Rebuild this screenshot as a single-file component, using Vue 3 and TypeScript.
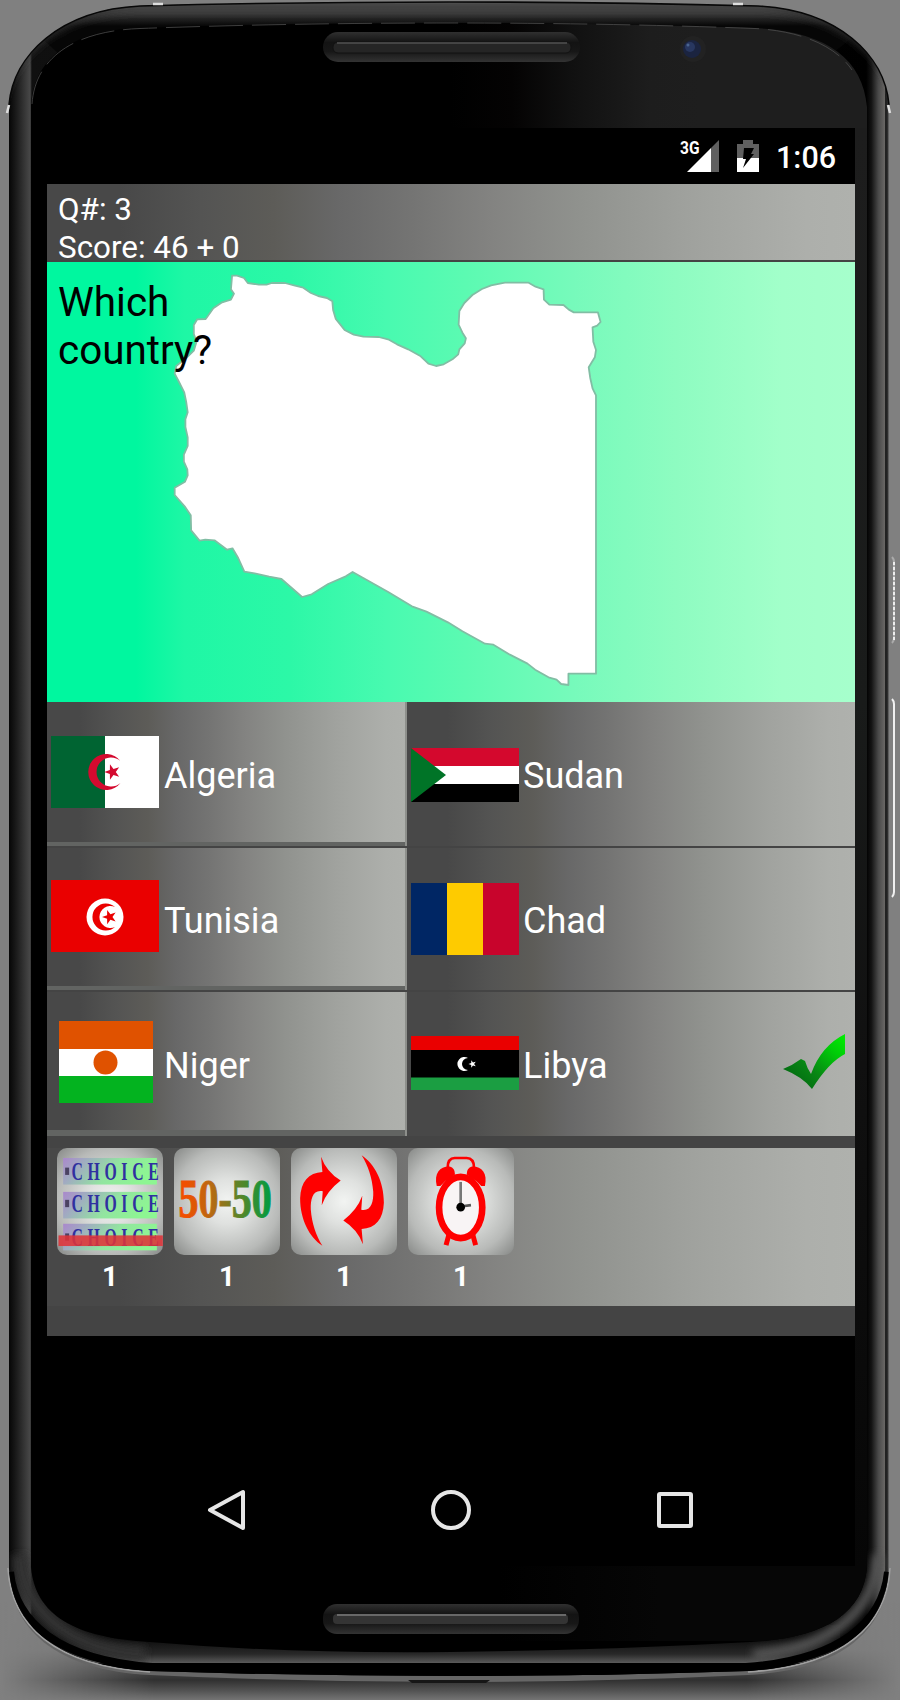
<script setup lang="ts">
interface Answer {
  name: string
  flag: string
  correct?: boolean
}

interface Lifeline {
  id: string
  left: number
}

interface ChoiceRow {
  top: number
  baseline: number
}

const answers: Answer[] = [
  { name: 'Algeria', flag: 'algeria' },
  { name: 'Sudan', flag: 'sudan' },
  { name: 'Tunisia', flag: 'tunisia' },
  { name: 'Chad', flag: 'chad' },
  { name: 'Niger', flag: 'niger' },
  { name: 'Libya', flag: 'libya', correct: true },
]

const lifelines: Lifeline[] = [
  { id: 'choice', left: 1 },
  { id: 'fifty', left: 1 },
  { id: 'swap', left: 1 },
  { id: 'time', left: 1 },
]

const choiceRows: ChoiceRow[] = [
  { top: 30, baseline: 96 },
  { top: 132, baseline: 193 },
  { top: 228, baseline: 294 },
]
const star = '0,-10 2.3,-3.2 9.5,-3.1 3.8,1.2 5.9,8.1 0,4 -5.9,8.1 -3.8,1.2 -9.5,-3.1 -2.3,-3.2'
const arrow =
  'M127 348 C88 322 60 270 60 205 C62 155 85 128 127 126 L123 80 Q138 124 182 152 Q140 184 125 226 L128 184 C98 178 91 208 92 238 C95 280 108 318 127 348Z'
</script>

<template>
  <div class="device">
    <svg class="frame" viewBox="0 0 900 1700" width="900" height="1700" aria-hidden="true">
      <defs>
        <linearGradient id="floor" x1="0" y1="1600" x2="0" y2="1700" gradientUnits="userSpaceOnUse">
          <stop offset="0" stop-color="#808080" />
          <stop offset=".5" stop-color="#747474" />
          <stop offset=".8" stop-color="#303030" />
          <stop offset=".9" stop-color="#505050" />
          <stop offset="1" stop-color="#747474" />
        </linearGradient>
        <linearGradient id="floorMaskFill" x1="0" x2="900" y1="0" y2="0" gradientUnits="userSpaceOnUse">
          <stop offset="0" stop-color="#000" />
          <stop offset=".17" stop-color="#fff" />
          <stop offset=".83" stop-color="#fff" />
          <stop offset="1" stop-color="#000" />
        </linearGradient>
        <mask id="floorMask"><rect x="0" y="1600" width="900" height="100" fill="url(#floorMaskFill)" /></mask>
        <linearGradient id="rimSides" x1="9" x2="889" y1="0" y2="0" gradientUnits="userSpaceOnUse">
          <stop offset="0" stop-color="#060606" />
          <stop offset=".006" stop-color="#151515" />
          <stop offset=".014" stop-color="#2b2b2b" />
          <stop offset=".024" stop-color="#484848" />
          <stop offset=".026" stop-color="#101010" />
          <stop offset=".974" stop-color="#000" />
          <stop offset=".98" stop-color="#131313" />
          <stop offset=".988" stop-color="#4a4a4a" />
          <stop offset=".995" stop-color="#686664" />
          <stop offset=".996" stop-color="#222" />
          <stop offset=".998" stop-color="#222" />
          <stop offset="1" stop-color="#777" />
        </linearGradient>
        <linearGradient id="topRim" x1="0" x2="0" y1="2" y2="26" gradientUnits="userSpaceOnUse">
          <stop offset="0" stop-color="#666" />
          <stop offset=".3" stop-color="#505050" />
          <stop offset=".65" stop-color="#272727" />
          <stop offset="1" stop-color="#060606" />
        </linearGradient>
        <linearGradient id="bottomRim" x1="0" x2="0" y1="1638" y2="1684" gradientUnits="userSpaceOnUse">
          <stop offset="0" stop-color="#0b0b0b" />
          <stop offset=".35" stop-color="#282828" />
          <stop offset=".54" stop-color="#5a5a5a" />
          <stop offset=".56" stop-color="#000" />
          <stop offset="1" stop-color="#000" />
        </linearGradient>
        <linearGradient id="sheen" x1="450" x2="700" y1="0" y2="0" gradientUnits="userSpaceOnUse">
          <stop offset="0" stop-color="#000" />
          <stop offset=".25" stop-color="#040303" />
          <stop offset=".5" stop-color="#111" />
          <stop offset=".8" stop-color="#1d1d1d" />
          <stop offset="1" stop-color="#1e1e1e" />
        </linearGradient>
        <linearGradient id="chin" x1="500" x2="660" y1="0" y2="0" gradientUnits="userSpaceOnUse">
          <stop offset="0" stop-color="#000" />
          <stop offset="1" stop-color="#060606" />
        </linearGradient>
        <linearGradient id="sideFace" x1="0" x2="0" y1="128" y2="1567" gradientUnits="userSpaceOnUse">
          <stop offset="0" stop-color="#1d1d1d" />
          <stop offset=".4" stop-color="#191b1a" />
          <stop offset=".65" stop-color="#101010" />
          <stop offset="1" stop-color="#060606" />
        </linearGradient>
        <linearGradient id="slot" x1="0" x2="0" y1="0" y2="1">
          <stop offset="0" stop-color="#303030" />
          <stop offset=".35" stop-color="#131313" />
          <stop offset=".65" stop-color="#171717" />
          <stop offset="1" stop-color="#333" />
        </linearGradient>
        <clipPath id="faceClip">
          <path d="M31 107 C33 60 70 30 140 28 Q290 23 450 23 T755 28 C825 31 863 58 867 107 V1567 C863 1615 823 1638 750 1642 Q610 1650 450 1652 T150 1642 C75 1638 35 1615 31 1567Z" />
        </clipPath>
        <clipPath id="bodyClip">
          <path d="M9 105 C13 55 60 10 140 6 Q290 2 450 2 T758 6 C838 10 885 55 889 105 V1568 C886 1625 843 1665 748 1671 Q600 1676 450 1676 T150 1671 C55 1665 12 1625 9 1568Z" />
        </clipPath>
        <filter id="soft" x="-10%" y="-10%" width="120%" height="120%"><feGaussianBlur stdDeviation="4" /></filter>
      </defs>

      <rect width="900" height="1700" fill="#808080" />
      <rect y="1600" width="900" height="100" fill="url(#floor)" mask="url(#floorMask)" />
      <path d="M8 1568 C11 1628 53 1670 150 1675 Q300 1682 450 1682 T748 1675 C845 1670 887 1628 890 1568" fill="#666" />
      <path d="M8 1568 C11 1625 54 1666 150 1672" fill="none" stroke="#a0a0a0" stroke-width="1.6" />
      <path d="M890 1568 C887 1625 844 1666 748 1672" fill="none" stroke="#a0a0a0" stroke-width="1.6" />
      <path d="M408 1680 L412 1683 H486 L490 1680Z" fill="#161616" />

      <g clip-path="url(#bodyClip)">
        <rect width="900" height="1700" fill="url(#rimSides)" />
        <path d="M0 0 H900 L760 110 H120Z" fill="url(#topRim)" />
        <path d="M-2 100 C4 48 50 -2 140 -5 H758 C848 -2 894 48 900 100" transform="translate(0 12)" fill="none" stroke="#343434" stroke-width="8" filter="url(#soft)" />
        <path d="M60 1625 H840 V1700 H60Z" fill="url(#bottomRim)" />
        <path d="M20 1555 C22 1605 62 1649 145 1655" fill="none" stroke="#333" stroke-width="16" filter="url(#soft)" />
        <path d="M878 1555 C876 1605 836 1649 753 1655" fill="none" stroke="#555" stroke-width="11" filter="url(#soft)" />
        <path d="M10 1572 C15 1622 58 1660 152 1667 H746 C840 1660 883 1622 888 1572" fill="none" stroke="#000" stroke-width="8" />
      </g>
      <path d="M9 105 C13 55 60 10 140 6 Q290 2 450 2 T758 6 C838 10 885 55 889 105" fill="none" stroke="#080808" stroke-width="1.6" />

      <g clip-path="url(#faceClip)">
        <rect width="900" height="1700" fill="#000" />
        <rect x="450" y="20" width="450" height="110" fill="url(#sheen)" />
        <rect x="855" y="128" width="12" height="1440" fill="url(#sideFace)" />
        <rect x="500" y="1566" width="370" height="75" fill="url(#chin)" />
      </g>
      <path d="M32 104 C35 60 71 31 140 28.500 Q290 23 450 23 T755 28.500 C800 31 835 45 852 70" fill="none" stroke="#4c4c4c" stroke-width="1" stroke-dasharray="34 9" opacity=".8" />
      <path d="M153 4 h10 M733 4 h10 M7 113 l2 -8 M890 113 l-2 -8" stroke="#ddd" stroke-width="2.5" />

      <rect x="323" y="32" width="257" height="30" rx="15" fill="url(#slot)" />
      <rect x="333" y="42" width="238" height="11" rx="5" fill="#252525" stroke="#121212" />
      <path d="M337 43 H567" stroke="#505050" stroke-width="1.5" />
      <rect x="323" y="1604" width="256" height="30" rx="14" fill="url(#slot)" />
      <rect x="333" y="1614" width="235" height="10" rx="4" fill="#343434" />
      <path d="M337 1615 H566" stroke="#686868" stroke-width="2" />

      <circle cx="693" cy="49" r="13" fill="#222" />
      <circle cx="692" cy="49" r="9" fill="#1b2440" />
      <circle cx="690" cy="47" r="5" fill="#283760" />
      <circle cx="688" cy="45" r="1.500" fill="#4a648f" />

      <path d="M892 557 q2 2 2 5 V638 q0 3 -2 5" fill="none" stroke="#aaa" stroke-width="2" />
      <path d="M894 562 V640" stroke="#eee" stroke-width="2" stroke-dasharray="3 2" />
      <path d="M892 699 q2 2 2 5 V892 q0 3 -2 5" fill="none" stroke="#f0f0f0" stroke-width="2" />
    </svg>

    <main class="screen">
      <header class="status">
        <svg class="signal" viewBox="0 0 40 34" width="40" height="34">
          <text x="0" y="15" class="net" textLength="19.5" lengthAdjust="spacingAndGlyphs">3G</text>
          <path d="M39 1 V33 H31 V9Z" fill="#606060" />
          <path d="M7 33 L31 9 V33Z" fill="#fff" />
        </svg>
        <svg class="battery" viewBox="0 0 22 32" width="22" height="32">
          <path d="M0 4 H6 V0 H16 V4 H22 V18 H0Z" fill="#606060" />
          <path d="M0 18 H22 V32 H0Z" fill="#fff" />
          <path d="M7 8 H17 L14 14 H17 L6 28 L9 19 H6Z" fill="#000" />
        </svg>
        <span class="clock">1:06</span>
      </header>

      <section class="score">
        <p>Q#: 3</p>
        <p>Score: 46 + 0</p>
      </section>

      <section class="question">
        <svg class="map" viewBox="18.3 6 2111.6 1320" preserveAspectRatio="none">
          <path
            d="M502 47 L515 47 L533 54 L543 69 L572 74 L592 74 L606 69 L640 69 L664 76 L688 83 L708 99 L727 108 L750 114 L764 124 L766 150 L773 177 L785 194 L796 210 L820 224 L845 230 L885 231 L912 239 L933 253 L962 268 L995 289 L1015 311 L1035 318 L1055 313 L1078 298 L1093 283 L1096 268 L1110 250 L1113 235 L1104 218 L1094 194 L1096 153 L1109 129 L1130 105 L1155 87 L1179 76 L1215 68 L1277 68 L1295 80 L1316 88 L1317 119 L1331 134 L1368 135 L1382 149 L1395 157 L1458 157 L1465 186 L1456 197 L1444 202 L1446 245 L1453 270 L1450 292 L1434 322 L1438 354 L1444 385 L1453 406 L1453 1241 L1381 1241 L1381 1275 L1362 1272 L1350 1259 L1329 1252 L1294 1229 L1274 1211 L1228 1184 L1185 1154 L1163 1151 L1104 1114 L1066 1087 L1010 1055 L972 1039 L910 996 L817 936 L799 949 L753 972 L710 1003 L685 1011 L631 957 L599 950 L561 940 L534 935 L518 894 L503 865 L489 869 L456 841 L432 839 L417 842 L395 811 L394 766 L378 739 L352 705 L352 683 L379 665 L386 646 L385 628 L376 605 L376 584 L386 558 L386 532 L380 501 L380 478 L386 457 L382 425 L377 397 L362 363 L352 341 L356 318 L386 290 L402 272 L409 245 L402 222 L402 195 L411 178 L433 177 L453 145 L476 127 L499 119 L507 101 L499 88Z"
          />
        </svg>
        <p class="prompt">Which<br />country?</p>
      </section>

      <section class="answers">
        <button v-for="item in answers" :key="item.name" class="answer" type="button">
          <span class="flag">
            <svg v-if="item.flag === 'algeria'" viewBox="0 0 108 72" width="108" height="72">
              <rect width="108" height="72" fill="#fff" />
              <rect width="54" height="72" fill="#006432" />
              <path d="M69.500 25 A18 18 0 1 0 69.500 47 A14.500 14.500 0 1 1 69.500 25Z" fill="#d40a2f" />
              <polygon :points="star" transform="translate(61.500 36) rotate(-90) scale(.82)" fill="#d40a2f" />
            </svg>
            <svg v-else-if="item.flag === 'sudan'" class="drop-sudan" viewBox="0 0 108 54" width="108" height="54">
              <rect width="108" height="54" fill="#fff" />
              <rect width="108" height="18" fill="#d4082d" />
              <rect y="36" width="108" height="18" fill="#000" />
              <path d="M0 0 L35 27 L0 54Z" fill="#007427" />
            </svg>
            <svg v-else-if="item.flag === 'tunisia'" class="lift-tunisia" viewBox="0 0 108 72" width="108" height="72">
              <rect width="108" height="72" fill="#ea0000" />
              <circle cx="54" cy="37" r="18.500" fill="#fff" />
              <path d="M64 27 A13.500 13.500 0 1 0 64 47 A11 11 0 1 1 64 27Z" fill="#ea0000" />
              <polygon :points="star" transform="translate(58.500 37) rotate(-90) scale(.75)" fill="#ea0000" />
            </svg>
            <svg v-else-if="item.flag === 'chad'" class="drop-chad" viewBox="0 0 108 72" width="108" height="72">
              <rect width="36" height="72" fill="#002664" />
              <rect x="36" width="36" height="72" fill="#fecb00" />
              <rect x="72" width="36" height="72" fill="#c8042c" />
            </svg>
            <svg v-else-if="item.flag === 'niger'" class="niger" viewBox="0 0 94 82" width="94" height="82">
              <rect width="94" height="82" fill="#fff" />
              <rect width="94" height="28" fill="#e05200" />
              <rect y="55" width="94" height="27" fill="#03b31f" />
              <circle cx="46.500" cy="41.500" r="12" fill="#e05200" />
            </svg>
            <svg v-else class="drop-libya" viewBox="0 0 108 54" width="108" height="54">
              <rect width="108" height="54" fill="#000" />
              <rect width="108" height="14" fill="#ea0000" />
              <rect y="41.500" width="108" height="12.500" fill="#1b9e42" />
              <path d="M57 22 A7 7 0 1 0 57 34 A5.800 5.800 0 1 1 57 22Z" fill="#fff" />
              <polygon :points="star" transform="translate(61.500 28) rotate(-90) scale(.4)" fill="#fff" />
            </svg>
          </span>
          <span class="name">{{ item.name }}</span>
          <svg v-if="item.correct" class="tick" viewBox="0 0 64 56" width="64" height="56">
            <defs>
              <linearGradient id="tickFill" x1="0" y1="1" x2="1" y2="0">
                <stop offset="0" stop-color="#005c10" />
                <stop offset=".4" stop-color="#088514" />
                <stop offset=".75" stop-color="#00cc08" />
                <stop offset="1" stop-color="#00f000" />
              </linearGradient>
            </defs>
            <path d="M0 35 Q10 31 18 25 L22 27 Q24 34 28 40 Q38 12 62 0 V20 Q46 28 29 55 Q20 43 0 35Z" fill="url(#tickFill)" />
          </svg>
        </button>
      </section>

      <section class="lifelines">
        <div v-for="line in lifelines" :key="line.id" class="lifeline">
          <span class="tile">
            <svg v-if="line.id === 'choice'" viewBox="0 0 318 322" width="106" height="107">
              <defs>
                <linearGradient id="bandFill" x1="0" y1="0" x2="1" y2=".25">
                  <stop offset="0" stop-color="#aa88cc" />
                  <stop offset=".25" stop-color="#a0adc0" />
                  <stop offset=".6" stop-color="#92e5a0" />
                  <stop offset="1" stop-color="#8df692" />
                </linearGradient>
              </defs>
              <g v-for="row in choiceRows" :key="row.top">
                <rect x="18" :y="row.top" width="282" height="80" fill="url(#bandFill)" />
                <rect x="24" :y="row.baseline - 37" width="12" height="22" fill="#4b4263" />
                <text :transform="`translate(43 ${row.baseline}) scale(.65 1)`" class="choice-text" textLength="404">CHOICE</text>
              </g>
              <rect x="4" y="263" width="314" height="32" fill="#e03238" opacity=".87" />
            </svg>
            <svg v-else-if="line.id === 'fifty'" viewBox="0 0 318 322" width="106" height="107">
              <defs>
                <linearGradient id="fiftyFill" x1="14" x2="292" y1="0" y2="0" gradientUnits="userSpaceOnUse">
                  <stop offset=".08" stop-color="#f05000" />
                  <stop offset=".35" stop-color="#b86a12" />
                  <stop offset=".65" stop-color="#5c8428" />
                  <stop offset="1" stop-color="#009c40" />
                </linearGradient>
              </defs>
              <text x="13" y="209" class="fifty-text" textLength="281" lengthAdjust="spacingAndGlyphs" fill="url(#fiftyFill)" stroke="url(#fiftyFill)">50-50</text>
            </svg>
            <svg v-else-if="line.id === 'swap'" viewBox="33 54 318 322" width="106" height="107">
              <path :d="arrow" fill="#f00" />
              <path :d="arrow" fill="#f00" transform="rotate(180 186 212)" />
            </svg>
            <svg v-else viewBox="384 54 318 322" width="106" height="107">
              <path d="M503 112 Q503 85 524 84 H560 Q582 85 582 112" fill="none" stroke="#f00" stroke-width="8" />
              <path d="M470 168 C461 130 480 109 509 110 Q525 114 525 134 L496 153 L481 168Z" fill="#f00" />
              <path d="M615 168 C624 130 605 109 576 110 Q560 114 560 134 L589 153 L604 168Z" fill="#f00" />
              <path d="M507 313 L498 346 M578 313 L587 346" stroke="#f00" stroke-width="15" />
              <ellipse cx="542" cy="233" rx="65" ry="92" fill="#f8f4f5" stroke="#f00" stroke-width="20" />
              <path d="M542 156 V232" stroke="#777" stroke-width="8" />
              <path d="M542 230 L573 226" stroke="#555" stroke-width="8" />
              <circle cx="542" cy="232" r="13" fill="#000" />
            </svg>
          </span>
          <span class="count">{{ line.left }}</span>
        </div>
      </section>

      <nav class="navbar">
        <svg viewBox="0 0 40 44" width="40" height="44"><path d="M3 22 L36 4 V40Z" /></svg>
        <svg viewBox="0 0 40 44" width="40" height="44"><circle cx="20" cy="22" r="18" /></svg>
        <svg viewBox="0 0 40 44" width="40" height="44"><rect x="4" y="6" width="32" height="32" rx="1" /></svg>
      </nav>
    </main>
  </div>
</template>

<style>
body {
  margin: 0;
  background: #808080;
}
</style>

<style scoped>
.device {
  --steel: linear-gradient(90deg, #484848 0%, #484848 9%, #545453 19%, #5d5c58 28%, #686868 36%, #747473 45%, #838381 55%, #90928e 66%, #a0a29e 80%, #adafab 94%, #afb1ad 100%);
  position: relative;
  width: 900px;
  height: 1700px;
  overflow: hidden;
  font-family: Roboto, "Liberation Sans", sans-serif;
}

.frame {
  position: absolute;
  inset: 0;
}

.screen {
  position: relative;
  display: flex;
  flex-direction: column;
  width: 808px;
  height: 1438px;
  margin: 0 45px 0 47px;
  top: 128px;
  background: #000;
  color: #fff;
}

.status {
  display: flex;
  align-items: flex-start;
  justify-content: flex-end;
  height: 56px;
  padding-right: 18px;
  box-sizing: border-box;
}

.signal {
  margin: 11px 17px 0 0;
}

.net {
  font: 700 19px Roboto, sans-serif;
  fill: #fff;
}

.battery {
  margin: 12px 17px 0 0;
}

.clock {
  width: 61px;
  margin-top: 12px;
  font-size: 30.5px;
  font-weight: 500;
  line-height: 36px;
}

.score {
  height: 78px;
  padding: 7px 0 0 11px;
  box-sizing: border-box;
  border-bottom: 2px solid #444;
  background: var(--steel);
}

.score p {
  margin: 0;
  font-size: 31.4px;
  line-height: 38px;
}

.question {
  position: relative;
  height: 440px;
  background: linear-gradient(90deg, #00f79f 0%, #00f79f 11%, #1ef7a5 17%, #2cf8a7 30%, #48fab0 42%, #5cfab2 52%, #76fabb 65%, #8efcc1 78%, #a2ffca 91%, #a6ffcc 100%);
}

.map {
  display: block;
  width: 808px;
  height: 440px;
}

.map path {
  fill: #fff;
  stroke: #82bda4;
  stroke-width: 1.8;
  stroke-linejoin: round;
  vector-effect: non-scaling-stroke;
}

.prompt {
  position: absolute;
  left: 11px;
  top: 17px;
  margin: 0;
  color: #000;
  font-size: 40.4px;
  line-height: 48px;
}

.answers {
  display: grid;
  grid-template-columns: 360px 448px;
  grid-template-rows: 146px 144px 144px;
}

.answer {
  display: flex;
  align-items: center;
  margin: 0;
  padding: 0 8px 0 4px;
  border: 0;
  border-bottom: 2px solid #444;
  background: var(--steel);
  color: #fff;
  font: 36px/42px Roboto, "Liberation Sans", sans-serif;
  text-align: left;
}

.answer:nth-child(odd) {
  box-shadow: inset -2px 0 #8d8f8b, inset 0 -4px #626462;
}

.answer:nth-child(n + 5) {
  border-bottom: 0;
}

.answer:nth-child(5) {
  box-shadow: inset -2px 0 #8d8f8b, inset 0 -6px #626462;
}

.flag {
  display: flex;
  justify-content: center;
  width: 108px;
  margin-right: 4px;
  padding-bottom: 4px;
}

.flag svg {
  display: block;
}

.answer:nth-child(odd) .flag {
  margin-right: 5px;
}

.drop-sudan {
  margin-top: 6px;
}

.lift-tunisia {
  margin-bottom: 2px;
}

.drop-chad {
  margin-top: 3px;
}

.drop-libya {
  margin-top: 2px;
}

.niger {
  margin-left: 2px;
}

.name {
  padding-top: 3px;
}

.tick {
  margin: 0 0 5px auto;
}

.lifelines {
  display: flex;
  gap: 11px;
  height: 200px;
  padding: 0 10px;
  box-sizing: border-box;
  border-top: 12px solid #444;
  border-bottom: 30px solid #444;
  background: var(--steel);
}

.lifeline {
  display: flex;
  flex-direction: column;
  align-items: center;
  width: 106px;
}

.tile {
  width: 106px;
  height: 107px;
  border-radius: 10px;
  background: radial-gradient(circle at 50% 50%, #f2f4f2 0%, #dfe1df 30%, #b8bab8 70%, #858785 100%);
}

.tile svg {
  display: block;
  overflow: visible;
}

.choice-text {
  font: 700 73px "Liberation Serif", serif;
  fill: #3030a0;
}

.fifty-text {
  font: 700 166px "Liberation Serif", serif;
  stroke-width: 3;
}

.count {
  margin-top: 5px;
  font-size: 28px;
  font-weight: 700;
  line-height: 34px;
}

.navbar {
  display: flex;
  justify-content: center;
  gap: 184px;
  padding-top: 152px;
}

.navbar svg {
  fill: none;
  stroke: #e6e6e6;
  stroke-width: 4;
  stroke-linejoin: round;
}
</style>
